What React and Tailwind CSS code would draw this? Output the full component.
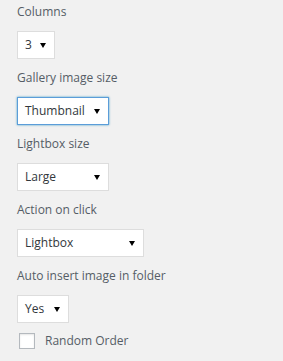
const fields = [
  { label: 'Columns', value: '3', width: 'w-[38px]' },
  { label: 'Gallery image size', value: 'Thumbnail', width: 'w-[92px]', focused: true },
  { label: 'Lightbox size', value: 'Large', width: 'w-[92px]' },
  { label: 'Action on click', value: 'Lightbox', width: 'w-[127px]' },
  { label: 'Auto insert image in folder', value: 'Yes', width: 'w-[52px]' },
];

const Arrow = () => (
  <svg width="6" height="5" viewBox="0 0 6 5" className="shrink-0">
    <polygon points="0,0 6,0 3,5" fill="#000" />
  </svg>
);

const FakeSelect = ({ value, width, focused }) => (
  <div
    className={`${width} h-[28px] flex items-center justify-between pl-[7px] pr-[8px] bg-white text-[12px] text-[#32373c] border ${
      focused ? 'border-[#5b9dd9] shadow-[0_0_2px_rgba(30,140,190,0.8)]' : 'border-[#ddd]'
    }`}
  >
    <span>{value}</span>
    <Arrow />
  </div>
);

const App = () => {
  return (
    <div
      className="w-[283px] h-[361px] bg-[#f1f1f1] pl-[17px] pt-[3px] text-[12px] text-[#555d66]"
      style={{ fontFamily: '"Open Sans", sans-serif' }}
    >
      {fields.map((f) => (
        <div key={f.label} className="mb-[10px]">
          <div className="h-[18px] leading-[18px] mb-[10px]">{f.label}</div>
          <FakeSelect value={f.value} width={f.width} focused={f.focused} />
        </div>
      ))}
      <label className="flex items-center h-[16px] ml-[2px]">
        <span className="w-[16px] h-[16px] bg-white border border-[#b4b9be] shadow-[inset_0_1px_2px_rgba(0,0,0,0.1)]" />
        <span className="ml-[10px] leading-[16px]">Random Order</span>
      </label>
    </div>
  );
};

export default App;
